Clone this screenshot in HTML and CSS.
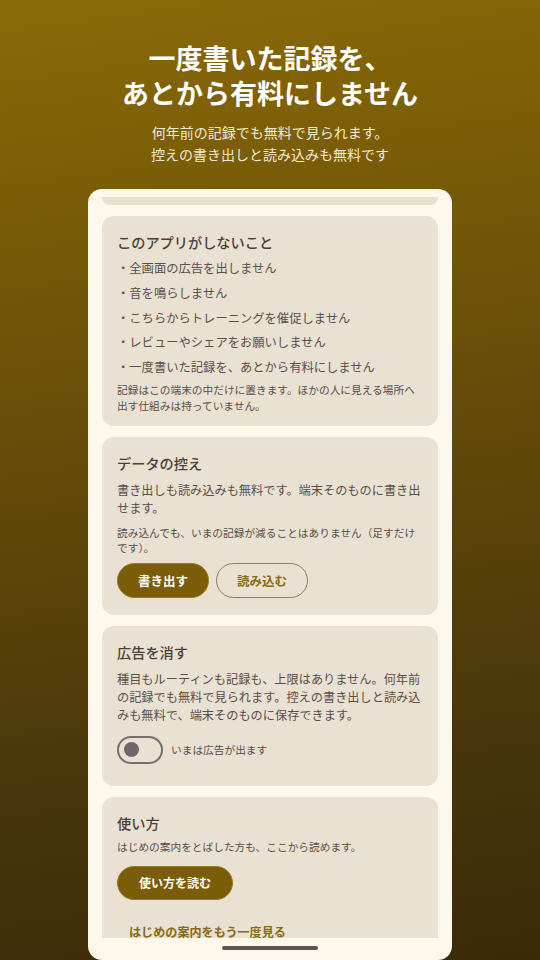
FILE: index.html
```html
<!DOCTYPE html>
<html lang="ja">
<head>
  <meta charset="UTF-8" />
  <meta name="viewport" content="width=device-width, initial-scale=1.0" />
  <title>広告と料金について</title>
  <link rel="stylesheet" href="styles.css">
</head>
<body>
  <div class="hero">
    <h1>一度書いた記録を、<br>あとから有料にしません</h1>
    <p class="hero-sub">何年前の記録でも無料で見られます。<br>控えの書き出しと読み込みも無料です</p>
  </div>

  <div class="sheet">
    <div class="sheet-scroll">
      <div class="card-tail"></div>

      <!-- What the app won't do -->
      <section class="card">
        <h2 class="card-title">このアプリがしないこと</h2>
        <ul class="promise-list">
          <li>・全画面の広告を出しません</li>
          <li>・音を鳴らしません</li>
          <li>・こちらからトレーニングを催促しません</li>
          <li>・レビューやシェアをお願いしません</li>
          <li>・一度書いた記録を、あとから有料にしません</li>
        </ul>
        <p class="card-note first-note">記録はこの端末の中だけに置きます。ほかの人に見える場所へ出す仕組みは持っていません。</p>
      </section>

      <!-- Backup -->
      <section class="card">
        <h2 class="card-title">データの控え</h2>
        <p class="card-body">書き出しも読み込みも無料です。端末そのものに書き出せます。</p>
        <p class="card-note">読み込んでも、いまの記録が減ることはありません（足すだけです）。</p>
        <div class="button-row">
          <button class="btn btn-filled">書き出す</button>
          <button class="btn btn-outline">読み込む</button>
        </div>
      </section>

      <!-- Remove ads -->
      <section class="card">
        <h2 class="card-title">広告を消す</h2>
        <p class="card-body">種目もルーティンも記録も、上限はありません。何年前の記録でも無料で見られます。控えの書き出しと読み込みも無料で、端末そのものに保存できます。</p>
        <div class="toggle-row">
          <span class="toggle"><span class="toggle-knob"></span></span>
          <span class="toggle-label">いまは広告が出ます</span>
        </div>
      </section>

      <!-- How to use -->
      <section class="card">
        <h2 class="card-title">使い方</h2>
        <p class="card-note how-note">はじめの案内をとばした方も、ここから読めます。</p>
        <button class="btn btn-filled btn-wide">使い方を読む</button>
        <button class="text-link">はじめの案内をもう一度見る</button>
      </section>
    </div>
    <div class="home-bar"></div>
  </div>
</body>
</html>
```

FILE: styles.css
```css
body {
  margin: 0;
  padding: 0;
  height: 960px;
  overflow: hidden;
  font-family: "Noto Sans CJK JP", "Noto Sans", sans-serif;
  background: linear-gradient(172deg, #8a6a07 0%, #6e5208 35%, #4a370a 75%, #3a2a08 100%);
  color: #fff;
}
.hero {
  text-align: center;
  padding-top: 40px;
}
.hero h1 {
  margin: 0;
  font-size: 27px;
  line-height: 35px;
  font-weight: 700;
  color: #fff;
}
.hero-sub {
  margin: 11px 0 0;
  font-size: 14px;
  line-height: 22px;
  color: #f1e8d4;
}
.sheet {
  margin: 24px 88px 0;
  height: 771px;
  background-color: #fdf8ec;
  border-radius: 14px;
  display: flex;
  flex-direction: column;
  overflow: hidden;
}
.sheet-scroll {
  margin-top: 8px;
  height: 741px;
  overflow: hidden;
  padding: 0 14px;
  display: flex;
  flex-direction: column;
  gap: 11px;
}
.card-tail {
  flex: none;
  height: 8px;
  background-color: #e8e0cf;
  border-radius: 0 0 12px 12px;
}
.card {
  flex: none;
  background-color: #e9e1d1;
  border-radius: 12px;
  padding: 16px 15px 12px;
}
.card-title {
  margin: 0 0 4px;
  font-size: 14.2px;
  line-height: 20px;
  font-weight: 500;
  color: #4a3f3c;
}
.promise-list {
  list-style: none;
  margin: 0;
  padding: 0;
  font-size: 12.3px;
  line-height: 24.8px;
  color: #5a4f4b;
}
.card-body {
  margin: 8px 0 0;
  font-size: 12.2px;
  line-height: 18px;
  color: #5a4f4b;
}
.card-note {
  margin: 8px 0 0;
  font-size: 10.7px;
  line-height: 15.5px;
  color: #5a4f4b;
}
.first-note {
  margin-top: 2px;
  line-height: 16px;
}
.button-row {
  display: flex;
  gap: 7px;
  margin-top: 7px;
  padding-bottom: 5px;
}
.btn {
  font-family: inherit;
  height: 35px;
  width: 92px;
  border-radius: 18px;
  font-size: 12.5px;
  font-weight: 700;
  cursor: pointer;
  padding: 0;
}
.btn-filled {
  background-color: #7b5c07;
  border: 1px solid #9a7a22;
  color: #fff;
}
.btn-outline {
  background-color: transparent;
  border: 1px solid #8a7f78;
  color: #8a6a12;
}
.toggle-row {
  display: flex;
  align-items: center;
  gap: 8px;
  height: 48px;
  margin-top: 2px;
}
.toggle {
  box-sizing: border-box;
  width: 46px;
  height: 28px;
  border: 2px solid #7a6f70;
  border-radius: 14px;
  display: flex;
  align-items: center;
  padding-left: 5px;
}
.toggle-knob {
  width: 15px;
  height: 15px;
  border-radius: 50%;
  background-color: #6f6570;
}
.toggle-label {
  font-size: 10.7px;
  color: #5a4f4b;
}
.how-note {
  margin-top: 6px;
  line-height: 16px;
}
.btn-wide {
  display: block;
  width: 116px;
  height: 34px;
  margin-top: 11px;
  font-size: 12px;
}
.text-link {
  display: block;
  margin-top: 12px;
  height: 40px;
  padding: 0 12px;
  border: none;
  background: transparent;
  font-family: inherit;
  font-size: 12.1px;
  font-weight: 700;
  color: #8a6a12;
  cursor: pointer;
}
.home-bar {
  width: 96px;
  height: 4px;
  border-radius: 2px;
  background-color: #5a5550;
  margin: 8px auto 0;
}
```
